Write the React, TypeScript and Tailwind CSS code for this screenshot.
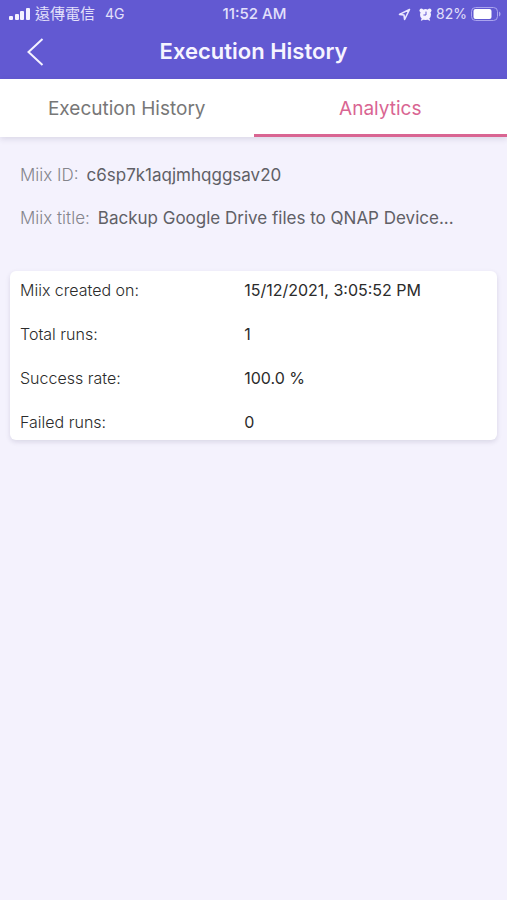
const metrics = [
  { label: "Miix created on:", value: "15/12/2021, 3:05:52 PM" },
  { label: "Total runs:", value: "1" },
  { label: "Success rate:", value: "100.0 %" },
  { label: "Failed runs:", value: "0" },
];

function StatusBar() {
  return (
    <div className="grid h-7 grid-cols-3 items-center pr-1.5 pl-2 text-sm text-[#e3e0fb]">
      <div className="flex items-center gap-1 whitespace-nowrap">
        <svg width="23" height="14" viewBox="0 0 23 14" fill="#f4f2ff" aria-hidden="true">
          <rect x="1" y="9" width="4" height="4" rx="1" />
          <rect x="7" y="7" width="4" height="6" rx="1" />
          <rect x="12" y="4" width="4" height="9" rx="1" />
          <rect x="18" y="1" width="4" height="12" rx="1" />
        </svg>
        <span className="text-[15px]">遠傳電信</span>
        <span className="ml-1.5">4G</span>
      </div>
      <span className="text-center text-[15px] font-medium">11:52 AM</span>
      <div className="flex items-center justify-end gap-1">
        <svg width="13" height="13" viewBox="0 0 13 13" fill="none" stroke="#e9e6ff" strokeWidth="1.6" strokeLinejoin="round" aria-hidden="true">
          <path d="M11.5 1.5 1.500 6.400 6 7 6.600 11.500Z" />
        </svg>
        <svg className="ml-1" width="13" height="13" viewBox="0 0 13 13" aria-hidden="true">
          <g fill="#f4f2ff">
            <circle cx="2.4" cy="2.4" r="1.9" />
            <circle cx="10.600" cy="2.4" r="1.9" />
            <circle cx="6.5" cy="6.6" r="5.5" />
            <path d="m1.800 12.300 1.800-3h5.800l1.800 3-1 .4-2-1.700H4.800l-2 1.700Z" />
          </g>
          <path d="M7 3.600v3.400H4.400" fill="none" stroke="#6259d2" strokeWidth="1" />
        </svg>
        <span>82%</span>
        <svg width="30" height="14" viewBox="0 0 30 14" aria-hidden="true">
          <rect x="0.5" y="0.5" width="26" height="13" rx="4" fill="none" stroke="#aaa4ee" />
          <rect x="2.5" y="2" width="18" height="10" rx="2" fill="#ffffff" />
          <path d="M28 4.500c2 .8 2 4.200 0 5Z" fill="#aaa4ee" />
        </svg>
      </div>
    </div>
  );
}

export default function App() {
  return (
    <div className="min-h-screen bg-[#f4f2fd] font-[Inter,'Noto_Sans_CJK_TC',sans-serif]">
      <header className="bg-[#6259d2]">
        <StatusBar />
        <div className="grid h-[51px] grid-cols-[64px_1fr_64px] items-center pb-1">
          <button type="button" aria-label="Back" className="flex h-full items-center pl-[27px]">
            <svg width="17" height="28" viewBox="0 0 17 28" fill="none" stroke="#f4f2ff" strokeWidth="2" aria-hidden="true">
              <path d="M15.500 1 1.500 14l14 13" />
            </svg>
          </button>
          <h1 className="text-center text-[22px] font-semibold text-[#f6f4ff]">Execution History</h1>
        </div>
      </header>
      <nav className="grid h-[58px] grid-cols-2 bg-white text-[19px] shadow-[0_2px_6px_rgba(60,50,90,0.14)]">
        <button type="button" className="border-b-3 border-transparent pt-1.5 text-[#777777]">
          Execution History
        </button>
        <button type="button" aria-current="page" className="border-b-3 border-[#d96592] pt-1.5 text-[#d96592]">
          Analytics
        </button>
      </nav>
      <main className="px-2.5 pt-[26px]">
        <dl className="flex flex-col gap-[19px] px-2.5 text-[17px] leading-6 text-[#606066]">
          <div className="flex gap-2">
            <dt className="shrink-0 font-light text-[#85858c]">Miix ID:</dt>
            <dd>c6sp7k1aqjmhqggsav20</dd>
          </div>
          <div className="flex gap-2">
            <dt className="shrink-0 font-light text-[#85858c]">Miix title:</dt>
            <dd className="truncate">Backup Google Drive files to QNAP Device...</dd>
          </div>
        </dl>
        <dl className="mt-[41px] flex flex-col gap-5 rounded-md bg-white px-2.5 pt-[7px] pb-1.5 text-base leading-6 text-[#2b2b2b] shadow-[0_2px_5px_rgba(60,50,90,0.14)]">
          {metrics.map(({ label, value }) => (
            <div key={label} className="grid grid-cols-[12fr_13fr]">
              <dt className="font-light">{label}</dt>
              <dd>{value}</dd>
            </div>
          ))}
        </dl>
      </main>
    </div>
  );
}
